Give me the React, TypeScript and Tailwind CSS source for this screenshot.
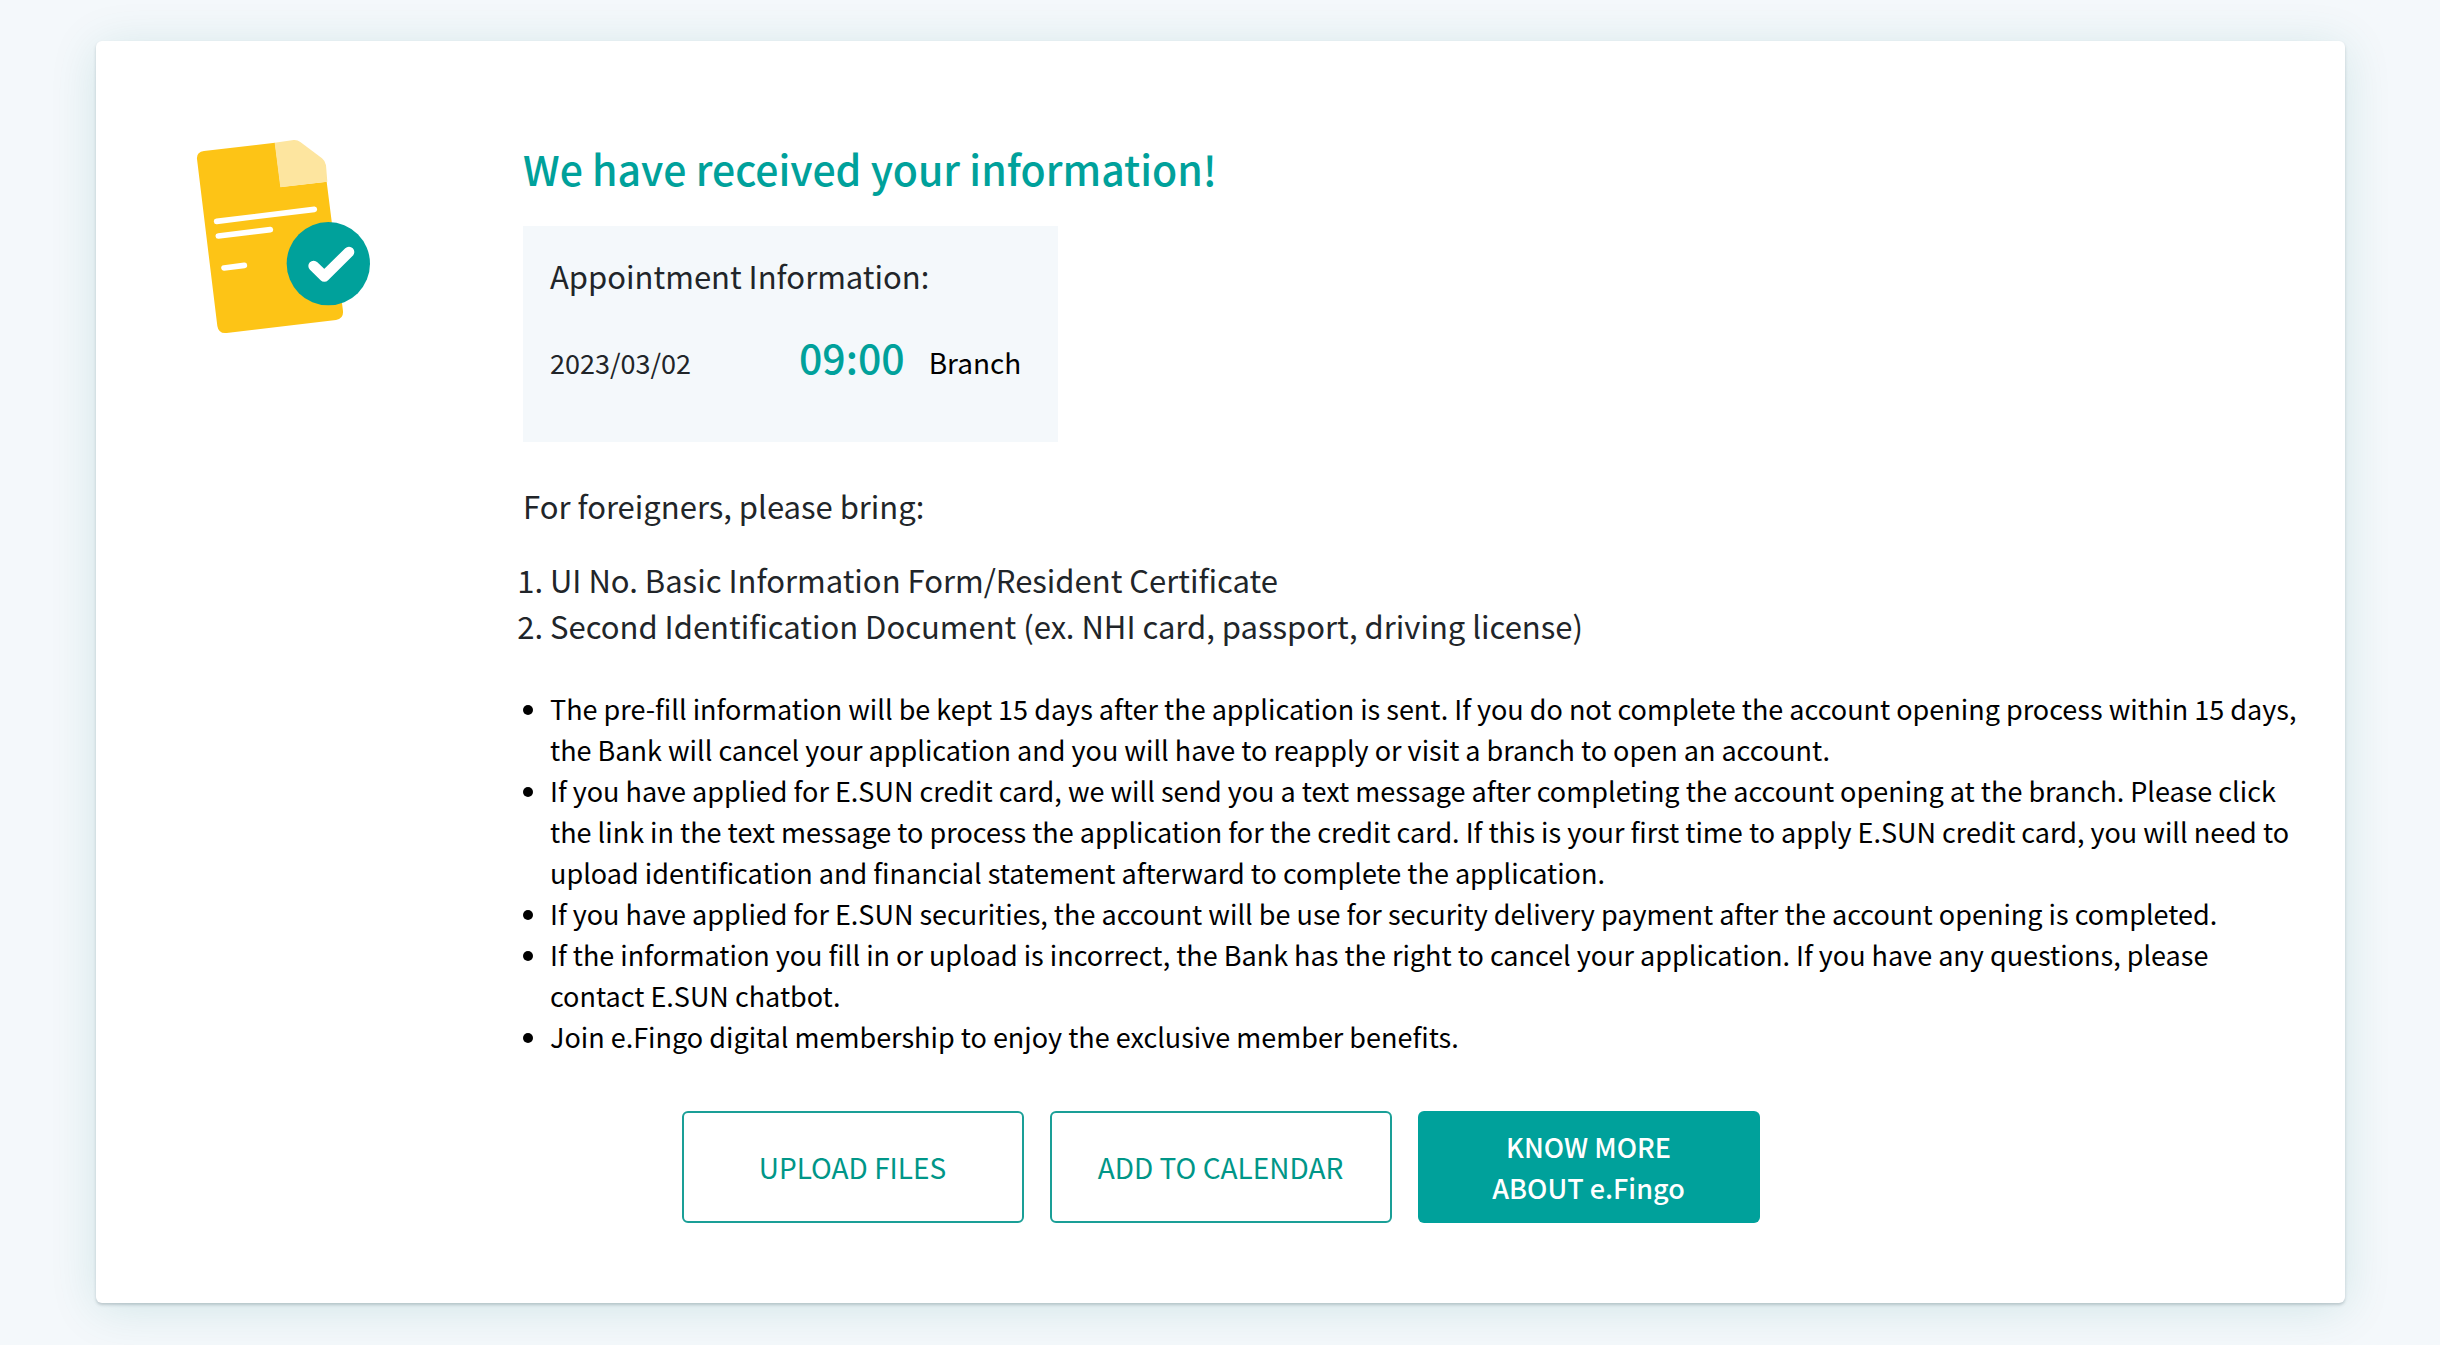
import React from 'react';

const documents = [
  'UI No. Basic Information Form/Resident Certificate',
  'Second Identification Document (ex. NHI card, passport, driving license)'
];

const notices = [
  'The pre-fill information will be kept 15 days after the application is sent. If you do not complete the account opening process within 15 days, the Bank will cancel your application and you will have to reapply or visit a branch to open an account.',
  'If you have applied for E.SUN credit card, we will send you a text message after completing the account opening at the branch. Please click the link in the text message to process the application for the credit card. If this is your first time to apply E.SUN credit card, you will need to upload identification and financial statement afterward to complete the application.',
  'If you have applied for E.SUN securities, the account will be use for security delivery payment after the account opening is completed.',
  'If the information you fill in or upload is incorrect, the Bank has the right to cancel your application. If you have any questions, please contact E.SUN chatbot.',
  'Join e.Fingo digital membership to enjoy the exclusive member benefits.'
];

function DocumentIcon() {
  return (
    <svg className="w-[240px] h-[240px]" viewBox="0 0 720 720" fill="none" aria-hidden="true">
      <path
        d="M132 123L345 98L362 231L500 215L549 603Q551 626 528 630L200 669Q176 672 172 648L111 147Q109 126 132 123Z"
        fill="#FDC416"
      />
      <path d="M344 98L401 90Q412 89 421 96L486 145Q496 153 498 166L502 215L361 232Z" fill="#FDE59F" />
      <g stroke="#fff" strokeWidth="17" strokeLinecap="round">
        <path d="M170 334L463 298" />
        <path d="M175 378L331 359" />
        <path d="M192 474L253 466" />
      </g>
      <circle cx="505" cy="461" r="125" fill="#00A19B" />
      <path d="M461 468L493 499L567 426" stroke="#fff" strokeWidth="32" strokeLinecap="round" strokeLinejoin="round" />
    </svg>
  );
}

export default function App() {
  return (
    <div className="min-h-screen bg-[#f4f8fb] pl-24 pr-[95px] py-[41px] font-['Noto_Sans_CJK_TC','Noto_Sans',sans-serif] text-black">
      <main className="bg-white rounded-md pt-[69px] pb-[80px] shadow-[0_2px_3px_rgba(60,80,90,0.25),0_6px_48px_rgba(0,120,110,0.14)]">
        <div className="flex pl-16 pr-10">
          {/* Illustration */}
          <div className="w-[363px] shrink-0">
            <DocumentIcon />
          </div>

          {/* Result */}
          <div className="flex-1 min-w-0 pt-7">
            <h1 className="text-[41px] leading-[60px] font-medium text-[#00a19b]">
              We have received your information!
            </h1>

            <section className="mt-7 w-[535px] h-[216px] bg-[#f4f8fb] px-[27px] pt-[26px]">
              <h2 className="text-[31px] leading-[48px] text-[#212529]">Appointment Information:</h2>
              <div className="mt-7 flex items-baseline leading-[56px]">
                <span className="w-[249px] text-[27px] text-[#212529]">2023/03/02</span>
                <span className="text-[41px] font-medium text-[#00a19b]">09:00</span>
                <span className="ml-6 text-[28px]">Branch</span>
              </div>
            </section>

            <p className="mt-[41px] text-[31px] leading-[46px] text-[#212529]">For foreigners, please bring:</p>
            <ol className="mt-7 pl-[27px] list-decimal text-[31px] leading-[46px] text-[#212529]">
              {documents.map((item) => (
                <li key={item}>{item}</li>
              ))}
            </ol>

            <ul className="mt-[39px] pl-[27px] list-disc text-[27px] leading-[41px]">
              {notices.map((item) => (
                <li key={item}>{item}</li>
              ))}
            </ul>
          </div>
        </div>

        {/* Actions */}
        <div className="mt-[54px] flex justify-center gap-[26px] text-[28px] leading-[41px]">
          <button className="w-[342px] h-[112px] rounded-md border-2 border-[#1a9f97] bg-white text-[#009688]">
            UPLOAD FILES
          </button>
          <button className="w-[342px] h-[112px] rounded-md border-2 border-[#1a9f97] bg-white text-[#009688]">
            ADD TO CALENDAR
          </button>
          <button className="w-[342px] h-[112px] rounded-md bg-[#00a19b] text-[27px] font-medium text-white">
            KNOW MORE
            <br />
            ABOUT e.Fingo
          </button>
        </div>
      </main>
    </div>
  );
}
